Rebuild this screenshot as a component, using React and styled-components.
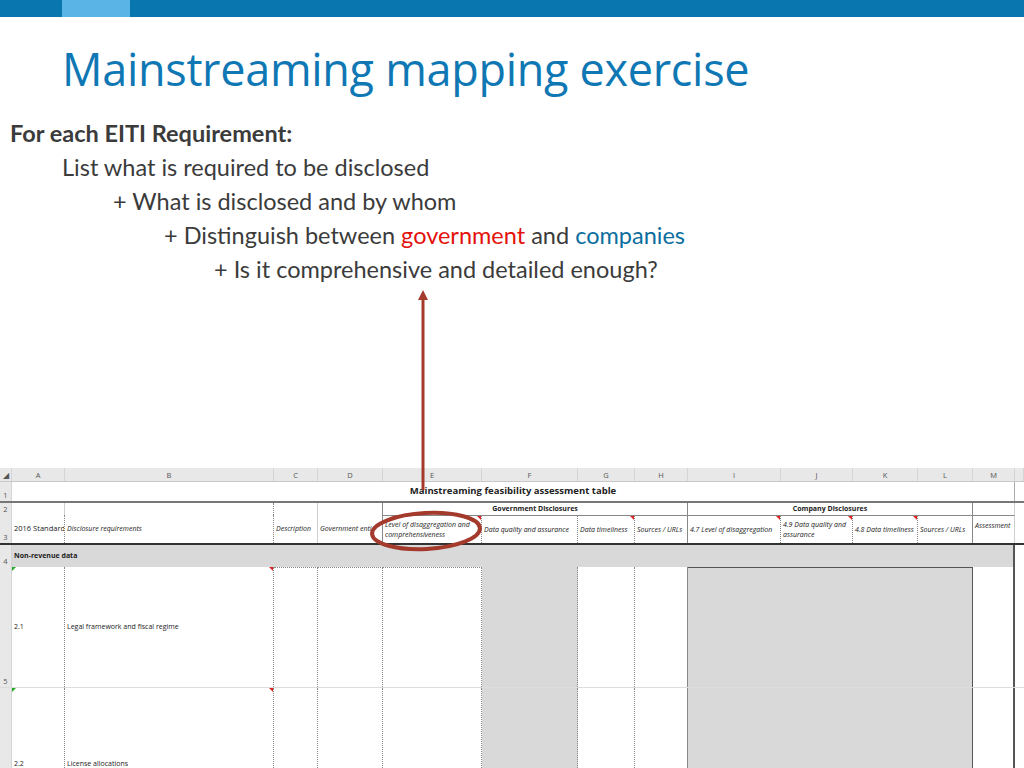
import React from "react";
import styled, { createGlobalStyle } from "styled-components";

const G = createGlobalStyle`
  body{margin:0;font-family:"Open Sans","Noto Sans",sans-serif;background:#fff;}
`;
const Page = styled.div`width:1024px;height:768px;overflow:hidden;position:relative;background:#fff;`;
const TopBar = styled.div`height:17px;background:#0a76b0;display:flex;`;
const TopAccent = styled.div`margin-left:62px;width:68px;background:#5ab4e5;`;
const Title = styled.h1`margin:24px 0 0 62px;font-weight:400;font-size:45px;line-height:56px;color:#0f78b4;font-family:"Open Sans",sans-serif;letter-spacing:-0.3px;`;
const List = styled.div`margin-top:19px;color:#3b3b3b;font-size:23.5px;line-height:34px;font-family:Lato,"Open Sans",sans-serif;`;
const Line = styled.div`padding-left:${p => p.i}px;font-weight:${p => p.b ? 700 : 400};`;
const Red = styled.span`color:#e3120b;`;
const Blue = styled.span`color:#0b6e9e;`;

const Sheet = styled.div`position:absolute;left:0;top:468px;width:1024px;font-family:"Open Sans",sans-serif;`;
const cols = "12px 53px 209px 44px 65px 99px 96px 57px 53px 93px 72px 65px 55px 42px 9px";
const Row = styled.div`display:grid;grid-template-columns:${cols};height:${p => p.h}px;
  border-bottom:${p => p.bb || "1px solid #e2e2e2"};box-sizing:border-box;`;
const Hd = styled.div`background:#e8e8e8;color:#555;font-size:7.5px;display:flex;align-items:${p => p.rn ? "flex-end" : "center"};
  justify-content:center;border-right:1px solid #d4d4d4;padding-bottom:${p => p.rn ? 1 : 0}px;box-sizing:border-box;`;
const Cell = styled.div`grid-column:span ${p => p.span || 1};background:${p => p.gray ? "#d9d9d9" : "#fff"};
  border-right:${p => p.br || "1px dotted #888"};font-size:${p => p.fs || 7}px;color:#222;
  font-style:${p => p.it ? "italic" : "normal"};font-weight:${p => p.b ? 700 : 400};
  display:flex;align-items:${p => p.al || "center"};justify-content:${p => p.jc || "flex-start"};
  padding:0 2px;box-sizing:border-box;line-height:1.3;overflow:hidden;white-space:${p => p.wrap ? "normal" : "nowrap"};
  position:relative;border-top:${p => p.bt || "none"};`;
const Flag = styled.span`position:absolute;top:0;${p => p.left ? "left:0" : "right:0"};width:0;height:0;
  border-top:4px solid ${p => p.c || "#d22"};${p => p.left ? "border-right:4px solid transparent" : "border-left:4px solid transparent"};`;
const Overlay = styled.svg`position:absolute;left:0;top:0;pointer-events:none;`;

const letters = ["A","B","C","D","E","F","G","H","I","J","K","L","M",""];
const N = "1px solid #cfcfcf";

export default function App() {
  return (
    <Page>
      <G />
      <TopBar><TopAccent /></TopBar>
      <Title>Mainstreaming mapping exercise</Title>
      <List>
        <Line i={10} b>For each EITI Requirement:</Line>
        <Line i={62}>List what is required to be disclosed</Line>
        <Line i={113}>+ What is disclosed and by whom</Line>
        <Line i={164}>+ Distinguish between <Red>government</Red> and <Blue>companies</Blue></Line>
        <Line i={214}>+ Is it comprehensive and detailed enough?</Line>
      </List>
      <Sheet>
        <Row h={14} bb="1px solid #c8c8c8">
          <Hd>◢</Hd>
          {letters.map((l, i) => <Hd key={i}>{l}</Hd>)}
        </Row>
        <Row h={21} bb="2px solid #777">
          <Hd rn>1</Hd>
          <Cell span={13} jc="center" b fs={9.5} br="1px solid #aaa">Mainstreaming feasibility assessment table</Cell>
          <Cell br="none" />
        </Row>
        <Row h={12} bb="none">
          <Hd rn>2</Hd>
          <Cell br={N} /><Cell /><Cell br={N} /><Cell br="1px solid #888" />
          <Cell span={4} jc="center" b fs={7} br="1px solid #888">Government Disclosures</Cell>
          <Cell span={4} jc="center" b fs={7} br="1px solid #888">Company Disclosures</Cell>
          <Cell br={N} /><Cell br="none" />
        </Row>
        <Row h={30} bb="2px solid #333">
          <Hd rn>3</Hd>
          <Cell fs={7.5}>2016 Standard</Cell>
          <Cell it>Disclosure requirements</Cell>
          <Cell it br={N}>Description</Cell>
          <Cell it br="1px solid #888">Government enti</Cell>
          <Cell it wrap bt="1px solid #888">Level of disaggregation and comprehensiveness<Flag /></Cell>
          <Cell it bt="1px solid #888">Data quality and assurance</Cell>
          <Cell it bt="1px solid #888">Data timeliness<Flag /></Cell>
          <Cell it br="1px solid #888" bt="1px solid #888">Sources / URLs</Cell>
          <Cell it bt="1px solid #888">4.7 Level of disaggregation<Flag /></Cell>
          <Cell it wrap bt="1px solid #888">4.9 Data quality and assurance<Flag /></Cell>
          <Cell it bt="1px solid #888">4.8 Data timeliness<Flag /></Cell>
          <Cell it br="1px solid #888" bt="1px solid #888">Sources / URLs</Cell>
          <Cell it al="flex-start" br={N} bt="1px solid #888"><span style={{ marginTop: 5 }}>Assessment</span></Cell>
          <Cell br="none" />
        </Row>
        <Row h={22} bb="none">
          <Hd rn>4</Hd>
          <Cell span={13} gray b br="2px solid #555">Non-revenue data</Cell>
          <Cell br="none" />
        </Row>
        <Row h={121} bb="1px solid #ddd">
          <Hd rn>5</Hd>
          <Cell fs={7}>2.1<Flag left c="#2a2" /></Cell>
          <Cell>Legal framework and fiscal regime<Flag /></Cell>
          <Cell bt="1px dotted #888" />
          <Cell bt="1px dotted #888" />
          <Cell bt="1px dotted #888" />
          <Cell gray />
          <Cell /><Cell br="1px solid #888" />
          <Cell span={4} gray br="1px solid #555" bt="1px solid #555" />
          <Cell br="2px solid #555" />
          <Cell br="none" />
        </Row>
        <Row h={80} bb="none">
          <Hd />
          <Cell al="flex-end">2.2<Flag left c="#2a2" /></Cell>
          <Cell al="flex-end">License allocations<Flag /></Cell>
          <Cell /><Cell /><Cell />
          <Cell gray />
          <Cell /><Cell br="1px solid #888" />
          <Cell span={4} gray br="1px solid #555" />
          <Cell br="2px solid #555" />
          <Cell br="none" />
        </Row>
      </Sheet>
      <Overlay width="1024" height="768">
        <line x1="423" y1="298" x2="423" y2="490" stroke="#a33a2c" strokeWidth="3" />
        <polygon points="423,290 418,300 428,300" fill="#a33a2c" />
        <ellipse cx="426" cy="531" rx="54" ry="18" fill="none" stroke="#a33a2c" strokeWidth="4" transform="rotate(-3 426 531)" />
      </Overlay>
    </Page>
  );
}
